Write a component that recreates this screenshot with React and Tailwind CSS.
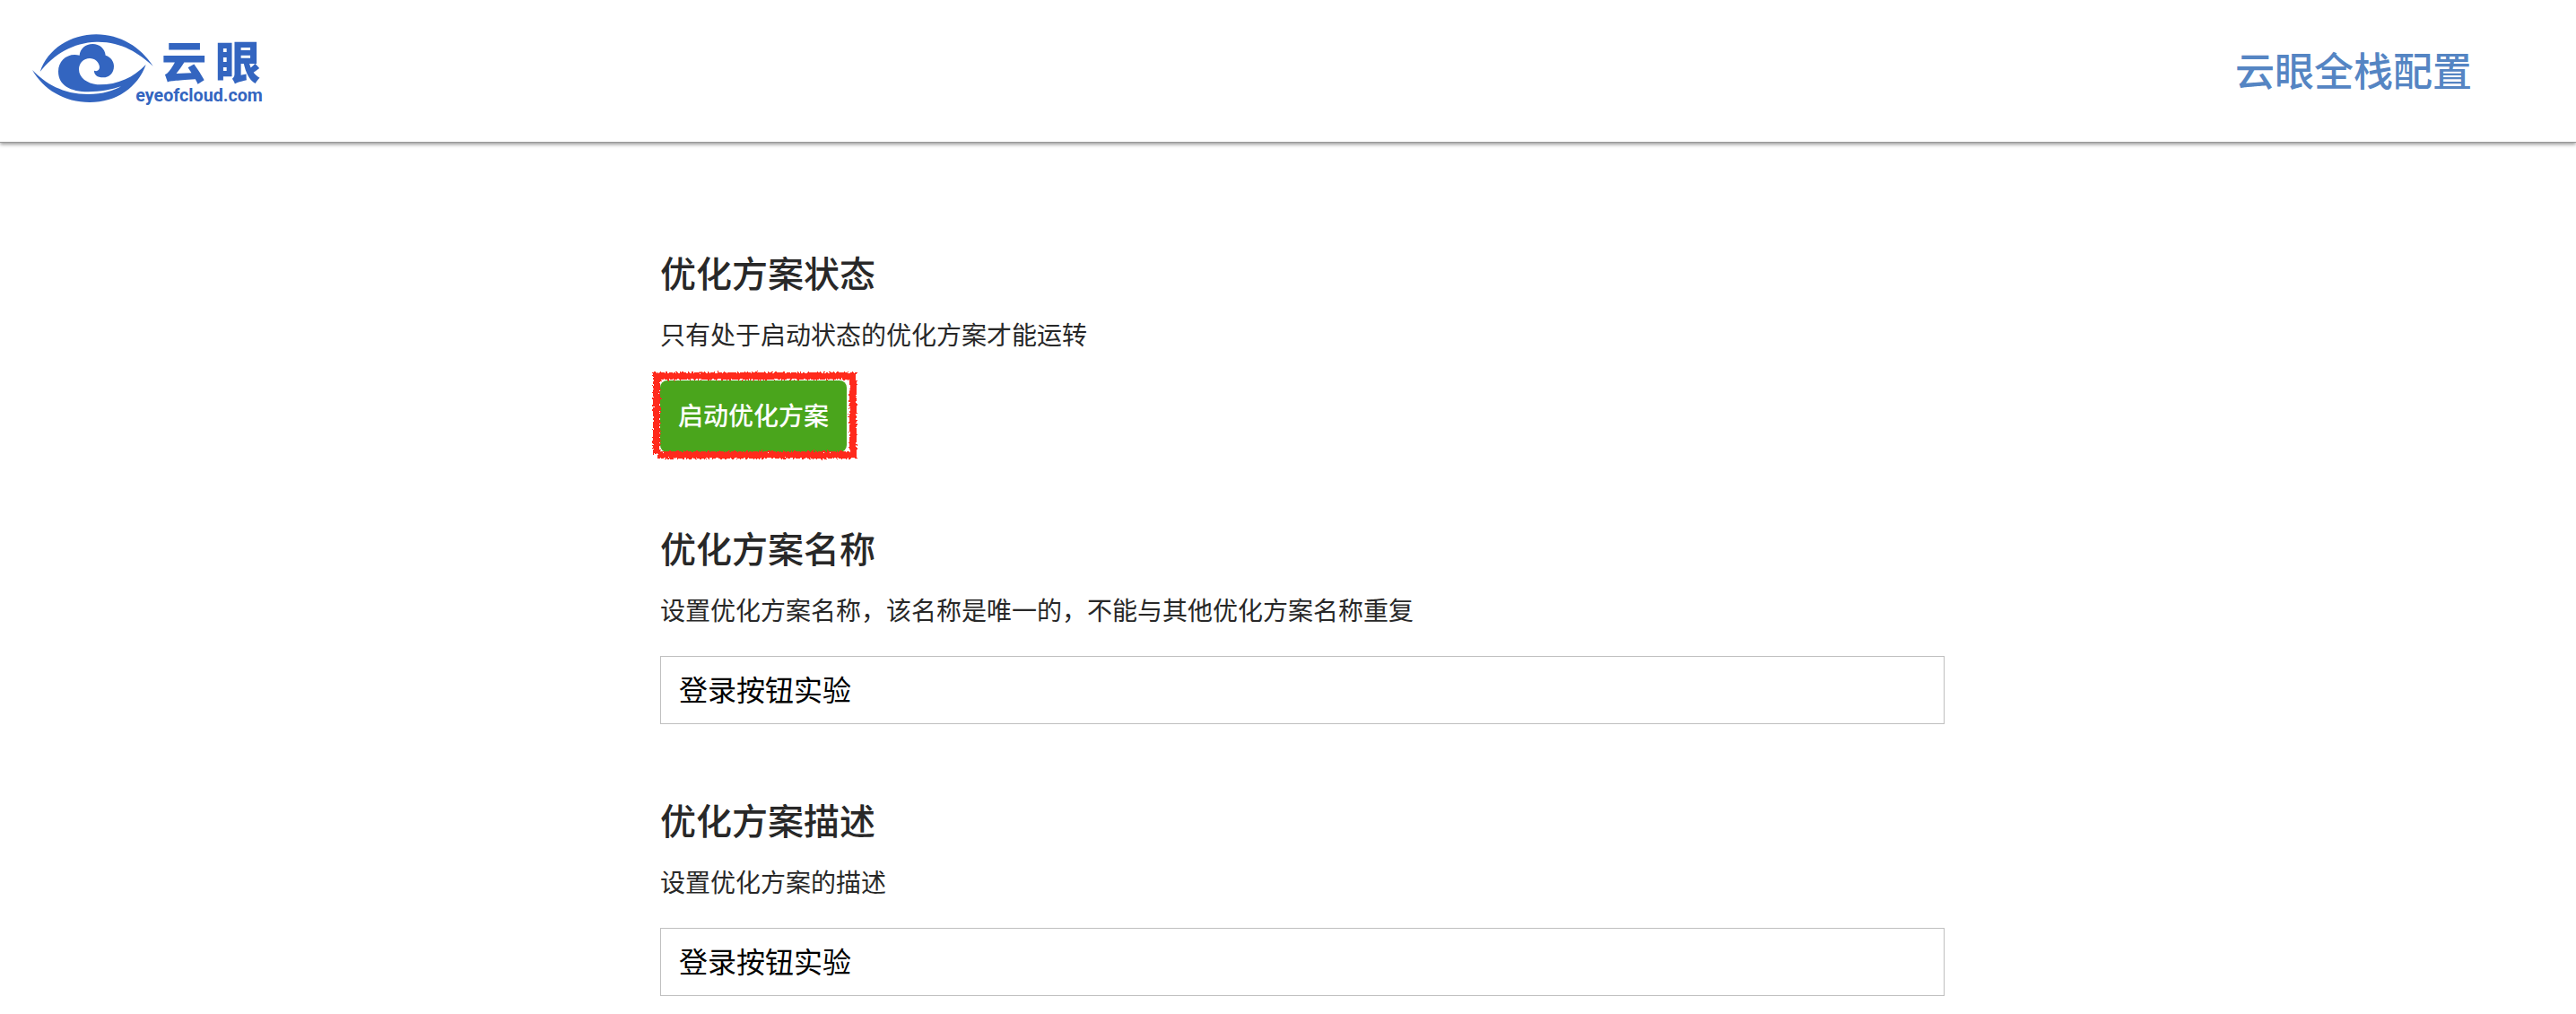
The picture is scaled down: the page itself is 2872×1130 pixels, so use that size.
const HEADING = 'text-[40px] leading-[60px] font-medium text-[#282828]';
const HINT = 'mt-2 text-[28px] leading-[62px] text-[#282828]';

function EyeLogo() {
  return (
    <svg viewBox="45 20 780 300" className="h-[100px] w-[260px] fill-[#3365c0]" role="img" aria-label="云眼">
      {/* upper eyelid */}
      <path d="M74 179 C100 102 176 54 262 54 C342 54 410 96 452 160 C404 116 345 77 262 79 C186 81 120 120 74 179 Z" />
      {/* cloud iris running into the lower eyelid */}
      <path d="M48 173 C92 218 150 254 235 254 C285 254 320 242 345 228 C318 237 275 246 235 246 C175 245 135 224 135 178 C135 140 168 114 206 124 C208 102 226 86 250 86 C273 86 291 102 293 124 C311 130 321 144 321 160 C321 183 305 198 285 198 C265 198 254 188 255 175 C265 179 272 174 273 164 C272 146 257 134 240 134 C220 134 204 150 204 171 C204 200 232 218 265 222 C330 224 385 200 428 155 C400 232 330 281 240 281 C155 281 85 238 48 173 Z" />
      <text x="481" y="204" className="font-['Noto_Sans_CJK_SC',sans-serif] text-[150px] font-black">云</text>
      <text x="660" y="204" className="font-['Noto_Sans_CJK_SC',sans-serif] text-[150px] font-black">眼</text>
      <text x="394" y="279" className="font-['Roboto',sans-serif] text-[59px] font-bold">eyeofcloud.com</text>
    </svg>
  );
}

// Hand-drawn marker frame around the start button
function MarkerFrame() {
  return (
    <svg viewBox="0 0 228 98" className="pointer-events-none absolute -top-[9px] -left-[9px] h-[98px] w-[228px] overflow-visible" aria-hidden="true">
      <filter id="crayon" x="-5%" y="-10%" width="110%" height="120%">
        <feTurbulence type="fractalNoise" baseFrequency="0.45" numOctaves="2" seed="4" result="noise" />
        <feDisplacementMap in="SourceGraphic" in2="noise" scale="6" xChannelSelector="R" yChannelSelector="G" />
      </filter>
      <path d="M1 4 H228 M224 1 V96 M228 92 H6 M5 91 V1" fill="none" stroke="#ff2a1a" strokeWidth="8" filter="url(#crayon)" />
    </svg>
  );
}

function TextSection({ id, title, hint, value }) {
  return (
    <section>
      <h2 className={HEADING}>
        <label htmlFor={id}>{title}</label>
      </h2>
      <p className={HINT}>{hint}</p>
      <input
        id={id}
        type="text"
        defaultValue={value}
        className="mt-[21px] block h-[76px] w-full border border-[#bfbfbf] bg-white px-5 pb-1 text-[32px] text-black outline-none"
      />
    </section>
  );
}

export default function App() {
  return (
    <div className="min-h-screen bg-white font-['Noto_Sans_CJK_SC',sans-serif]">
      <header className="flex h-[159px] items-center justify-between border-b border-[#999999] pr-[116px] pb-1 pl-[35px] shadow-[0_2px_4px_rgba(0,0,0,0.4)]">
        <a href="#home">
          <EyeLogo />
        </a>
        <h1 className="text-[44px] leading-[64px] font-medium text-[#5585c3]">云眼全栈配置</h1>
      </header>

      <main className="mx-auto flex max-w-[1464px] flex-col gap-[76px] pt-[114px] pl-8">
        <section>
          <h2 className={HEADING}>优化方案状态</h2>
          <p className={HINT}>只有处于启动状态的优化方案才能运转</p>
          <div className="relative mt-[21px] w-fit">
            <button type="button" className="block h-20 rounded-lg bg-[#4aa51c] px-5 pb-1 text-[28px] font-medium text-white">
              启动优化方案
            </button>
            <MarkerFrame />
          </div>
        </section>
        <TextSection id="plan-name" title="优化方案名称" hint="设置优化方案名称，该名称是唯一的，不能与其他优化方案名称重复" value="登录按钮实验" />
        <TextSection id="plan-desc" title="优化方案描述" hint="设置优化方案的描述" value="登录按钮实验" />
      </main>
    </div>
  );
}
